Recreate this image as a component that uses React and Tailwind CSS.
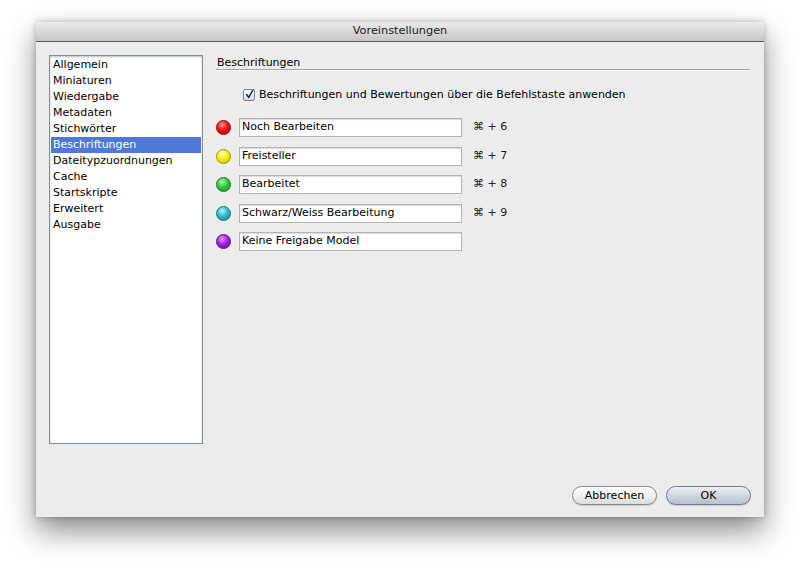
import React from 'react';

const sections = [
  'Allgemein',
  'Miniaturen',
  'Wiedergabe',
  'Metadaten',
  'Stichwörter',
  'Beschriftungen',
  'Dateitypzuordnungen',
  'Cache',
  'Startskripte',
  'Erweitert',
  'Ausgabe',
];

const labels = [
  { name: 'Noch Bearbeiten', key: '6', dot: 'bg-[radial-gradient(circle_at_40%_30%,#ff9a9a_0%,#f01010_45%,#b00000_100%)] border-[#9a0000]' },
  { name: 'Freisteller', key: '7', dot: 'bg-[radial-gradient(circle_at_40%_30%,#ffffc0_0%,#f4ee10_45%,#b8b000_100%)] border-[#a09800]' },
  { name: 'Bearbeitet', key: '8', dot: 'bg-[radial-gradient(circle_at_40%_30%,#b0f0b0_0%,#30c840_45%,#178a20_100%)] border-[#157a1d]' },
  { name: 'Schwarz/Weiss Bearbeitung', key: '9', dot: 'bg-[radial-gradient(circle_at_40%_30%,#b8f0f8_0%,#30b8cc_45%,#1a8090_100%)] border-[#187080]' },
  { name: 'Keine Freigabe Model', key: null, dot: 'bg-[radial-gradient(circle_at_40%_30%,#e8a0ff_0%,#a020e0_45%,#6a0aa0_100%)] border-[#5e0890]' },
];

export default function App() {
  return (
    <div className="w-[800px] h-[566px] bg-white pt-[22px] pl-[36px] font-['DejaVu_Sans',sans-serif] text-[11px] text-black">
      {/* Dialog window */}
      <div className="w-[728px] h-[495px] flex flex-col bg-[#ececec] shadow-[0_14px_28px_rgba(0,0,0,0.45),0_0_6px_rgba(0,0,0,0.25)]">
        {/* Title bar */}
        <div className="h-[20px] flex items-center justify-center bg-[linear-gradient(#ebebeb,#c6c6c6)] border-b border-[#5a5a5a] text-[11.3px] text-[#202020]">
          Voreinstellungen
        </div>

        <div className="flex-1 flex flex-col px-[13px] pt-[13px] pb-[12px]">
          <div className="flex gap-[13px]">
            {/* Section list */}
            <div className="w-[154px] h-[389px] bg-white border border-[#7f8c9c] shadow-[inset_0_1px_2px_rgba(0,0,0,0.25)] pt-[1px] px-[1px]">
              {sections.map((s) => (
                <div
                  key={s}
                  className={`h-[16px] leading-[16px] pl-[2px] ${s === 'Beschriftungen' ? 'bg-[#5079d7] text-white' : ''}`}
                >
                  {s}
                </div>
              ))}
            </div>

            {/* Right panel */}
            <div className="flex-1 pr-[1px]">
              <div className="h-[15px] flex items-end leading-[12px] pl-[1px] border-b border-[#a4a4a4] shadow-[0_1px_0_#fafafa]">
                Beschriftungen
              </div>

              <div className="flex items-center mt-[18px] pl-[27px] h-[14px]">
                <div className="w-[12px] h-[12px] border border-[#7b8794] rounded-[2px] bg-[linear-gradient(#fdfdfd,#d4dae2)] flex items-center justify-center mr-[4px]">
                  <svg width="11" height="11" viewBox="0 0 11 11" className="-mt-[2px] ml-[1px]">
                    <path d="M2 5.5 L4.5 9 L9.5 0.5" fill="none" stroke="#1e2a38" strokeWidth="1.8" strokeLinecap="round" strokeLinejoin="round" />
                  </svg>
                </div>
                <span>Beschriftungen und Bewertungen über die Befehlstaste anwenden</span>
              </div>

              <div className="flex flex-col gap-[9.5px] mt-[16px]">
                {labels.map((l) => (
                  <div key={l.name} className="flex items-center h-[19px]">
                    <div className={`w-[15px] h-[15px] rounded-full border ${l.dot}`} />
                    <div className="ml-[8px] w-[223px] h-[19px] bg-white border border-[#b4b4b4] shadow-[inset_0_1px_1px_rgba(0,0,0,0.15)] flex items-center pl-[2px]">
                      {l.name}
                    </div>
                    {l.key && (
                      <span className="ml-[11px] text-[#222]">⌘ + {l.key}</span>
                    )}
                  </div>
                ))}
              </div>
            </div>
          </div>

          {/* Buttons */}
          <div className="mt-auto flex justify-end gap-[9px]">
            <button className="w-[85px] h-[19px] rounded-full border border-[#8a8a8a] bg-[linear-gradient(#ffffff,#f0f0f0_50%,#dcdcdc)] shadow-[0_1px_1px_rgba(0,0,0,0.15)] text-[11px] leading-[17px]">
              Abbrechen
            </button>
            <button className="w-[85px] h-[19px] rounded-full border border-[#6e7c8c] bg-[linear-gradient(#eef1f5,#cfd7e0_50%,#b6c1cd)] shadow-[0_1px_1px_rgba(0,0,0,0.15)] text-[11px] leading-[17px]">
              OK
            </button>
          </div>
        </div>
      </div>
    </div>
  );
}
